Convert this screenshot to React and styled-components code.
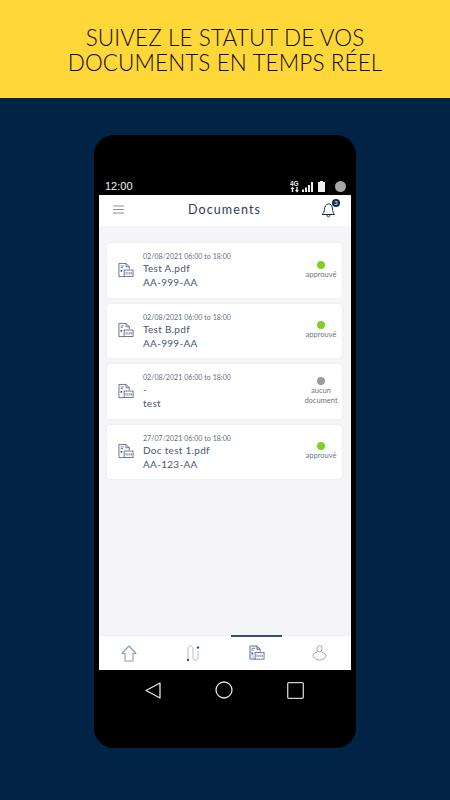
import React from "react";
import styled, { createGlobalStyle } from "styled-components";

const Global = createGlobalStyle`
  html, body { margin:0; padding:0; }
  body { width:450px; height:800px; overflow:hidden; background:#012345; font-family:"Lato","Liberation Sans",sans-serif; }
`;

const Page = styled.div`
  width:450px;
  height:800px;
  display:flex;
  flex-direction:column;
  align-items:center;
  background:#012345;
`;
const Banner = styled.div`
  width:100%;
  height:98px;
  flex-shrink:0;
  box-sizing:border-box;
  padding-top:2px;
  background:#ffd738;
  display:flex;
  flex-direction:column;
  align-items:center;
  justify-content:center;
`;
const BannerLine = styled.div`
  font-size:22.5px;
  line-height:25.5px;
  font-weight:300;
  letter-spacing:0.1px;
  color:#0c0b04;
  white-space:nowrap;
`;
const Phone = styled.div`
  margin-top:37px;
  width:262px;
  height:613px;
  background:#000;
  border-radius:20px;
  display:flex;
  flex-direction:column;
  padding:0 5px;
  box-sizing:border-box;
`;
const StatusBar = styled.div`
  height:60px;
  box-sizing:border-box;
  flex-shrink:0;
  display:flex;
  align-items:flex-end;
  justify-content:space-between;
  padding:0 5px 2px 6px;
  color:#f2f2f2;
`;
const Clock = styled.span`
  font-family:"Liberation Sans",sans-serif;
  font-size:11px;
  line-height:13px;
`;
const StatusIcons = styled.div`
  display:flex;
  align-items:center;
  gap:4px;
`;
const StatusDot = styled.span`
  width:11px;
  height:11px;
  margin-left:6px;
  border-radius:50%;
  background:#a8a8a8;
`;
const Screen = styled.div`
  height:475px;
  flex-shrink:0;
  background:#f5f5f8;
  display:flex;
  flex-direction:column;
`;
const AppHeader = styled.div`
  height:31px;
  flex-shrink:0;
  background:#fff;
  display:flex;
  align-items:center;
  justify-content:space-between;
  padding:0 15px 2px 14px;
  box-sizing:border-box;
`;
const Title = styled.div`
  font-size:12.5px;
  color:#2d3b58;
  letter-spacing:1.1px;
  margin-left:4px;
`;
const BellWrap = styled.div`
  position:relative;
  width:15px;
  height:18px;
`;
const Badge = styled.span`
  position:absolute;
  top:-2px;
  right:-4px;
  width:8px;
  height:8px;
  border-radius:50%;
  background:#152a4c;
  color:#fff;
  font-size:6px;
  line-height:8px;
  text-align:center;
`;
const List = styled.div`
  flex:1;
  padding:17px 9px 0 8px;
  display:flex;
  flex-direction:column;
  gap:6px;
`;
const Card = styled.div`
  height:54.5px;
  background:#fff;
  border-radius:4px;
  box-shadow:0 0 3px rgba(40,50,80,0.06);
  display:flex;
  align-items:center;
  padding:0 3px 0 11px;
`;
const DocIcon = styled.div`
  width:16px;
  margin-right:9px;
  display:flex;
`;
const CardText = styled.div`
  flex:1;
  display:flex;
  flex-direction:column;
  color:#4a5670;
`;
const DateLine = styled.div`
  font-size:7px;
  line-height:10px;
  color:#666e80;
  letter-spacing:0.05px;
`;
const NameLine = styled.div`
  font-size:10px;
  line-height:14px;
  letter-spacing:0.3px;
`;
const PlateLine = styled.div`
  font-size:10px;
  line-height:14px;
  letter-spacing:0.3px;
`;
const Status = styled.div`
  width:36px;
  display:flex;
  flex-direction:column;
  align-items:center;
  font-size:7.5px;
  line-height:10px;
  color:#6f7585;
  text-align:center;
`;
const Dot = styled.span`
  width:8px;
  height:8px;
  border-radius:50%;
  margin-bottom:1px;
  background:${p => (p.$on ? "#7ed321" : "#9b9b9b")};
`;
const BottomNav = styled.div`
  height:35px;
  flex-shrink:0;
  background:#fff;
  display:grid;
  grid-template-columns:repeat(4, 1fr);
`;
const NavItem = styled.div`
  position:relative;
  display:flex;
  align-items:center;
  justify-content:center;
  box-sizing:border-box;
  border-top:1px solid #eef0f4;
  &::before {
    content:"";
    display:${p => (p.$active ? "block" : "none")};
    position:absolute;
    top:-1px;
    left:6px;
    right:6px;
    height:2px;
    background:#3d4f6e;
  }
`;
const SoftKeys = styled.div`
  height:40px;
  display:flex;
  align-items:center;
  justify-content:space-between;
  padding:0 47px 0 46px;
`;

const DocGlyph = ({ size = 17, color = "#3d4c6a", fill = "none" }) => (
  <svg width={size} height={size} viewBox="0 0 17 17" fill="none" stroke={color} strokeWidth="0.8">
    <path d="M1 1h7.500l3.500 3.500V7M1 1v14h6" fill={fill} />
    <path d="M8.500 1v3.500H12" />
    <path d="M2.800 3.600h3.500M2.800 5.400h2.500" strokeWidth="0.7" />
    <rect x="2.700" y="8" width="1.800" height="1.800" fill={color} stroke="none" />
    <rect x="6.500" y="8" width="9.500" height="7" fill="#fff" />
    <path d="M8.500 10.200v2.600M10.500 10.200v2.600M12.500 10.200v2.600M14.200 10.200v2.600" strokeWidth="0.7" />
  </svg>
);

const docs = [
  { date: "02/08/2021 06:00 to 18:00", name: "Test A.pdf", plate: "AA-999-AA", status: "approuvé", on: true },
  { date: "02/08/2021 06:00 to 18:00", name: "Test B.pdf", plate: "AA-999-AA", status: "approuvé", on: true },
  { date: "02/08/2021 06:00 to 18:00", name: "-", plate: "test", status: "aucun document", on: false },
  { date: "27/07/2021 06:00 to 18:00", name: "Doc test 1.pdf", plate: "AA-123-AA", status: "approuvé", on: true },
];

const App = () => (
  <>
    <Global />
    <Page>
      <Banner>
        <BannerLine>SUIVEZ LE STATUT DE VOS</BannerLine>
        <BannerLine>DOCUMENTS EN TEMPS RÉEL</BannerLine>
      </Banner>
      <Phone>
        <StatusBar>
          <Clock>12:00</Clock>
          <StatusIcons>
            <svg width="24" height="13" viewBox="0 0 24 13" fill="#eee">
              <text x="0" y="5.500" fontSize="6.500" fontFamily="Liberation Sans" fontWeight="700">4G</text>
              <path d="M2.500 6.500L.5 9h1.300v3h1.400V9h1.300zM7 12.500L9 10H7.700V7H6.300v3H5z" />
              <path d="M12 9.500h2V12h-2zM15 7.500h2V12h-2zM18 5h2v7h-2zM21 2h2v10h-2z" />
            </svg>
            <svg width="7" height="11" viewBox="0 0 7 11" fill="#eee">
              <path d="M2 0h3v1h2v10H0V1h2z" />
            </svg>
            <StatusDot />
          </StatusIcons>
        </StatusBar>
        <Screen>
          <AppHeader>
            <svg width="11" height="9" viewBox="0 0 11 9" stroke="#8a93a6" strokeWidth="1">
              <path d="M0 1h11M0 4.500h11M0 8h11" />
            </svg>
            <Title>Documents</Title>
            <BellWrap>
              <svg width="15" height="18" viewBox="0 0 15 18" fill="none" stroke="#1c2c4c" strokeWidth="1">
                <path d="M1 13.500c2-1.300 2.200-3 2.500-5.500C3.800 5.500 5.200 3 7.500 2.800s3.800 2.200 4 5.200c.2 2.500.8 4 2 5.500z" />
                <path d="M6 14c.2 1.300.8 2 1.500 2s1.300-.7 1.500-2" />
              </svg>
              <Badge>3</Badge>
            </BellWrap>
          </AppHeader>
          <List>
            {docs.map((d, i) => (
              <Card key={i}>
                <DocIcon><DocGlyph /></DocIcon>
                <CardText>
                  <DateLine>{d.date}</DateLine>
                  <NameLine>{d.name}</NameLine>
                  <PlateLine>{d.plate}</PlateLine>
                </CardText>
                <Status>
                  <Dot $on={d.on} />
                  {d.status}
                </Status>
              </Card>
            ))}
          </List>
          <BottomNav>
            <NavItem>
              <svg width="16" height="17" viewBox="0 0 16 17" fill="none" stroke="#8c9ab2" strokeWidth="1.100" style={{ marginRight: 4 }}>
                <path d="M8 1L1 8.500h3V16h8V8.500h3z" strokeLinejoin="round" />
              </svg>
            </NavItem>
            <NavItem>
              <svg width="16" height="17" viewBox="0 0 16 17" fill="none" stroke="#a8b2c4" strokeWidth="0.9">
                <path d="M2 15V4c0-4 5-4 5 0v9c0 3 4.500 3 5 0V6" />
                <circle cx="2" cy="15" r="1.200" fill="#3d5680" stroke="none" />
                <circle cx="12" cy="2.500" r="1.200" fill="#3d5680" stroke="none" />
              </svg>
            </NavItem>
            <NavItem $active>
              <DocGlyph size={16} color="#46587a" fill="#dfe3ec" />
            </NavItem>
            <NavItem>
              <svg width="15" height="16" viewBox="0 0 15 16" fill="none" stroke="#8c9ab2" strokeWidth="0.9">
                <ellipse cx="7.500" cy="3.800" rx="2.600" ry="3.100" />
                <path d="M5.500 7.200C3 8 1 8.800 1 10.500c0 2 3 4.500 6.500 4.500s6.500-2.500 6.500-4.500c0-1.700-2-2.500-4.500-3.300" />
              </svg>
            </NavItem>
          </BottomNav>
        </Screen>
        <SoftKeys>
          <svg width="16" height="17" viewBox="0 0 16 17" fill="none" stroke="#e4e4e4" strokeWidth="1.300">
            <path d="M15 1v15L1 8.500z" strokeLinejoin="round" />
          </svg>
          <svg width="18" height="18" viewBox="0 0 18 18" fill="none" stroke="#e4e4e4" strokeWidth="1.300">
            <circle cx="9" cy="9" r="8" />
          </svg>
          <svg width="17" height="17" viewBox="0 0 17 17" fill="none" stroke="#d0d0d0" strokeWidth="1.300">
            <rect x="0.700" y="0.700" width="15.600" height="15.600" rx="1" />
          </svg>
        </SoftKeys>
      </Phone>
    </Page>
  </>
);

export default App;
